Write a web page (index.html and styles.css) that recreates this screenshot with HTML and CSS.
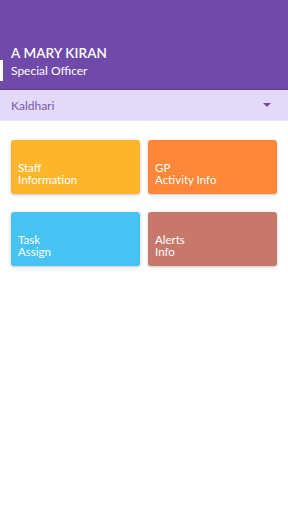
FILE: index.html
```html
<!DOCTYPE html>
<html lang="en">
<head>
  <meta charset="UTF-8">
  <title>Dashboard</title>
  <link rel="stylesheet" href="styles.css">
</head>
<body>

  <!-- Profile header -->
  <header class="profile">
    <div class="profile-name">A MARY KIRAN</div>
    <div class="profile-role">Special Officer</div>
  </header>

  <!-- Village selector -->
  <div class="selector">
    <span class="selector-value">Kaldhari</span>
    <span class="selector-arrow"></span>
  </div>

  <!-- Menu tiles -->
  <div class="tiles">
    <div class="tile tile-staff">Staff<br>Information</div>
    <div class="tile tile-gp">GP<br>Activity Info</div>
    <div class="tile tile-task">Task<br>Assign</div>
    <div class="tile tile-alerts">Alerts<br>Info</div>
  </div>

</body>
</html>
```

FILE: styles.css
```css
/* Global */
body {
  margin: 0;
  font-family: Lato, 'Open Sans', sans-serif;
  background: #fff;
  color: #333;
}

/* Header */
.profile {
  position: relative;
  height: 89px;
  background: #6f4aab;
  border-bottom: 1px solid #5e3d98;
  padding: 0 11px;
  box-sizing: content-box;
  display: flex;
  flex-direction: column;
  justify-content: flex-end;
  color: #fff;
}
.profile::before {
  content: '';
  position: absolute;
  left: 0;
  top: 60px;
  width: 3px;
  height: 21px;
  background: #fff;
}
.profile-name {
  font-size: 13.5px;
  font-weight: 600;
  letter-spacing: 0.1px;
  line-height: 18px;
  margin-bottom: 1px;
}
.profile-role {
  font-size: 12px;
  line-height: 16px;
  margin-bottom: 10px;
}

/* Selector */
.selector {
  height: 30px;
  background: #e3d9f8;
  border-bottom: 1px solid #ede7f8;
  padding: 0 17px 0 11px;
  display: flex;
  align-items: center;
  justify-content: space-between;
}
.selector-value {
  font-size: 12px;
  color: #7859a9;
}
.selector-arrow {
  width: 0;
  height: 0;
  border-left: 4px solid transparent;
  border-right: 4px solid transparent;
  border-top: 4px solid #6f4aab;
}

/* Tiles */
.tiles {
  display: grid;
  grid-template-columns: 129px 129px;
  column-gap: 8px;
  row-gap: 18px;
  padding: 19px 11px;
}
.tile {
  height: 54px;
  border-radius: 3px;
  box-shadow: 0 1px 3px rgba(0,0,0,0.22);
  color: #fff;
  font-size: 11.5px;
  line-height: 12px;
  padding: 0 7px 8px;
  box-sizing: border-box;
  display: flex;
  flex-direction: column;
  justify-content: flex-end;
}
.tile-staff { background: #fdb52c; }
.tile-gp { background: #fd8638; }
.tile-task { background: #46c3f3; }
.tile-alerts { background: #c7786b; }
```
